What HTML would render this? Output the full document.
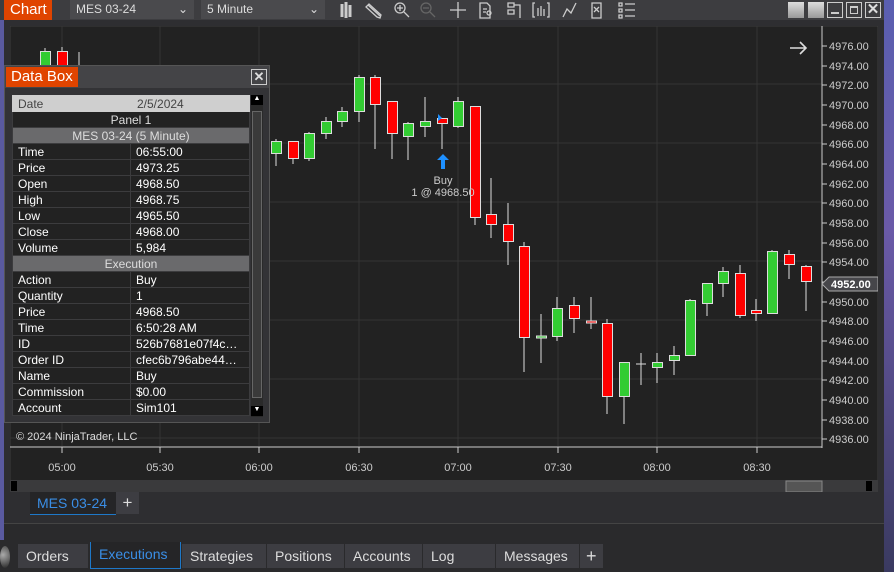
<!DOCTYPE html>
<html><head><meta charset="utf-8"><style>
*{margin:0;padding:0;box-sizing:border-box}
body{width:894px;height:572px;overflow:hidden;background:#2a2a2c;font-family:"Liberation Sans",sans-serif;position:relative}
.abs{position:absolute}
.dd{position:absolute;top:0;height:19px;background:#4a4a4d;color:#ddd;font-size:12px;line-height:18px;padding-left:6px}
.db td{height:16px;font-size:12px;color:#fff;border:1px solid #3c3c3e;padding:0 5px;white-space:nowrap;overflow:hidden}
.db tr.h td{background:#6a6a6c;color:#ddd;text-align:center}
.tab{position:absolute;top:544px;height:24px;background:#3d3d42;color:#ddd;font-size:14px;line-height:24px;padding-left:8px}
</style></head><body>
<div class="abs" style="left:884px;top:0;width:10px;height:572px;background:linear-gradient(#5a5fb0,#6a5aa8 40%,#3a3a60)"></div>
<div class="abs" style="left:0;top:20px;width:4px;height:520px;background:#5a5aa0"></div>
<div class="abs" style="left:0;top:0;width:884px;height:20px;background:#3d3d40"></div>
<div class="abs" style="left:4px;top:0;width:48px;height:20px;background:#e04400;color:#fff;font-size:15px;line-height:19px;padding-left:6px">Chart</div>
<div class="dd" style="left:70px;width:124px">MES 03-24<span style="position:absolute;right:6px">⌄</span></div>
<div class="dd" style="left:201px;width:124px">5 Minute<span style="position:absolute;right:6px">⌄</span></div>
<svg class="abs" style="left:330px;top:0" width="310" height="20" fill="none" stroke="#ccc" stroke-width="1.3">
<path d="M12 4v13M16 2v16M20 5v12" stroke-width="3"/>
<path d="M38 5l12 11M36 7l3-3 12 11-1 3-3-1z"/>
<circle cx="70" cy="8" r="5"/><path d="M74 12l5 5M67 8h6M70 5v6"/>
<g stroke="#666"><circle cx="96" cy="8" r="5"/><path d="M100 12l5 5M93 8h6"/></g>
<path d="M128 2v16M120 10h16"/>
<path d="M150 3h7l3 3v12h-10zM153 9h4M153 12h3"/><circle cx="159" cy="13" r="2"/>
<path d="M178 3h6v4h-6zM178 10h6v4h-6zM184 5h6v13"/>
<path d="M205 3h-2v14h2M217 3h2v14h-2M208 8v8M211 6v10M214 9v7"/>
<path d="M233 17l4-8 4 4 5-10"/>
<path d="M262 3h9v15h-9zM264 7l5 5M264 12l5-5"/>
<path d="M289 3h3v3h-3zM289 9h3v3h-3zM289 15h3v3h-3zM295 4h10M295 10h10M295 16h10"/>
</svg>
<div class="abs" style="left:788px;top:2px;width:16px;height:16px;background:linear-gradient(#ddd,#999)"></div>
<div class="abs" style="left:808px;top:2px;width:16px;height:16px;background:linear-gradient(#ddd,#999)"></div>
<div class="abs" style="left:827px;top:2px;width:16px;height:16px;border:1px solid #ccc"><div style="position:absolute;left:3px;right:3px;bottom:3px;height:2px;background:#ccc"></div></div>
<div class="abs" style="left:846px;top:2px;width:16px;height:16px;border:1px solid #ccc"><div style="position:absolute;left:3px;right:3px;top:3px;bottom:3px;border:1px solid #ccc;border-top-width:2px"></div></div>
<div class="abs" style="left:865px;top:2px;width:16px;height:16px;border:1px solid #ccc;color:#ddd;font-size:15px;line-height:13px;text-align:center;font-weight:bold">✕</div>
<div class="abs" style="left:4px;top:20px;width:880px;height:504px;background:#2e2e31;border-bottom:1px solid #444"></div>
<svg class="abs" style="left:10px;top:26px" width="868" height="466">
<rect x="0" y="0" width="868" height="466" fill="#222" stroke="#3c3c3c"/>
<g stroke="#343434" stroke-width="1">
<path d="M52 0v420M150 0v420M249 0v420M349 0v420M448 0v420M548 0v420M647 0v420M747 0v420"/>
<path d="M0 58h812M0 117h812M0 176h812M0 235h812M0 294h812M0 353h812M0 412h812"/>
</g>
<path d="M0 421h812M812 0v422" stroke="#ccc"/>
<g stroke="#ccc"><path d="M52 421v6M150 421v6M249 421v6M349 421v6M448 421v6M548 421v6M647 421v6M747 421v6"/>
<path d="M812 20h5M812 40h5M812 59h5M812 79h5M812 99h5M812 118h5M812 138h5M812 158h5M812 177h5M812 197h5M812 217h5M812 236h5M812 256h5M812 276h5M812 295h5M812 315h5M812 335h5M812 354h5M812 374h5M812 394h5M812 413h5"/></g>
<g fill="#ccc" font-size="11" font-family="Liberation Sans">
<text x="819" y="24">4976.00</text><text x="819" y="44">4974.00</text><text x="819" y="63">4972.00</text><text x="819" y="83">4970.00</text><text x="819" y="103">4968.00</text><text x="819" y="122">4966.00</text><text x="819" y="142">4964.00</text><text x="819" y="162">4962.00</text><text x="819" y="181">4960.00</text><text x="819" y="201">4958.00</text><text x="819" y="221">4956.00</text><text x="819" y="240">4954.00</text><text x="819" y="280">4950.00</text><text x="819" y="299">4948.00</text><text x="819" y="319">4946.00</text><text x="819" y="339">4944.00</text><text x="819" y="358">4942.00</text><text x="819" y="378">4940.00</text><text x="819" y="398">4938.00</text><text x="819" y="417">4936.00</text>
<text x="52" y="445" text-anchor="middle">05:00</text><text x="150" y="445" text-anchor="middle">05:30</text><text x="249" y="445" text-anchor="middle">06:00</text><text x="349" y="445" text-anchor="middle">06:30</text><text x="448" y="445" text-anchor="middle">07:00</text><text x="548" y="445" text-anchor="middle">07:30</text><text x="647" y="445" text-anchor="middle">08:00</text><text x="747" y="445" text-anchor="middle">08:30</text>
</g>
<path d="M812 258l7-7h49v14h-49z" fill="#46464a" stroke="#aaa"/>
<text x="821" y="262" fill="#fff" font-size="11" font-weight="bold" font-family="Liberation Sans">4952.00</text>
<path d="M780 22h16M790 16l6 6-6 6" stroke="#ddd" stroke-width="1.6" fill="none"/>
<rect x="0" y="454" width="868" height="12" fill="#3a3a3c"/>
<rect x="1" y="455" width="6" height="10" fill="#000"/><rect x="856" y="455" width="6" height="10" fill="#000"/>
<rect x="776" y="455" width="36" height="11" fill="#555" stroke="#888"/>
</svg>
<svg class="abs" style="left:0;top:0" width="894" height="572">
<g stroke="#ddd" stroke-width="1">
<path d="M45 48v16M62 47v17M79 52v14M276 139v27M293 141v23M309 132v29M326 117v22M342 107v20M359 75v47M375 75v74M392 101v58M408 122v38M425 97v40M442 118v31M458 97v31M475 106v119M491 178v60M508 203v62M524 242v130M541 314v49M557 297v44M574 297v36M591 297v32M607 319v95M624 362v62M641 353v32M657 353v30M674 346v29M690 299v56M707 283v33M723 267v30M740 265v53M756 299v22M772 250v64M789 250v29M806 265v46"/>
</g>
<g stroke="#ddd" stroke-width="1">
<rect x="40.5" y="51.5" width="10" height="15" fill="#33cc33"/>
<rect x="57.5" y="51.5" width="10" height="15" fill="#f00"/>
<g fill="#33cc33">
<rect x="271.5" y="141.5" width="10" height="12"/><rect x="304.5" y="133.5" width="10" height="25"/><rect x="321.5" y="121.5" width="10" height="12"/><rect x="337.5" y="111.5" width="10" height="10"/><rect x="354.5" y="77.5" width="10" height="34"/><rect x="403.5" y="123.5" width="10" height="13"/><rect x="420.5" y="121.5" width="10" height="5"/><rect x="453.5" y="101.5" width="10" height="25"/><rect x="536.5" y="336" width="10" height="2"/><rect x="552.5" y="308.5" width="10" height="28"/><rect x="619.5" y="362.5" width="10" height="34"/><rect x="652.5" y="362.5" width="10" height="5"/><rect x="669.5" y="355.5" width="10" height="5"/><rect x="685.5" y="300.5" width="10" height="55"/><rect x="702.5" y="283.5" width="10" height="20"/><rect x="718.5" y="271.5" width="10" height="12"/><rect x="767.5" y="251.5" width="10" height="62"/>
</g>
<g fill="#f00">
<rect x="288.5" y="141.5" width="10" height="17"/><rect x="370.5" y="77.5" width="10" height="27"/><rect x="387.5" y="101.5" width="10" height="32"/><rect x="437.5" y="118.5" width="10" height="5"/><rect x="470.5" y="106.5" width="10" height="111"/><rect x="486.5" y="214.5" width="10" height="10"/><rect x="503.5" y="224.5" width="10" height="17"/><rect x="519.5" y="246.5" width="10" height="91"/><rect x="569.5" y="305.5" width="10" height="13"/><rect x="586.5" y="321" width="10" height="2"/><rect x="602.5" y="323.5" width="10" height="73"/><rect x="735.5" y="273.5" width="10" height="42"/><rect x="751.5" y="310.5" width="10" height="3"/><rect x="784.5" y="254.5" width="10" height="10"/><rect x="801.5" y="266.5" width="10" height="15"/>
</g>
</g>
<path d="M636 364h10" stroke="#ddd"/>
<path d="M438 114l4 4-4 3z" fill="#1e90ff"/>
<path d="M443 154l-6 6h4v9h4v-9h4z" fill="#1e90ff"/>
<text x="443" y="184" fill="#ccc" font-size="11" text-anchor="middle" font-family="Liberation Sans">Buy</text>
<text x="443" y="196" fill="#ccc" font-size="11" text-anchor="middle" font-family="Liberation Sans">1 @ 4968.50</text>
<text x="16" y="440" fill="#ddd" font-size="11" font-family="Liberation Sans">© 2024 NinjaTrader, LLC</text>
</svg>
<div class="abs" style="left:4px;top:65px;width:266px;height:358px;background:#333336;border:1px solid #555">
<div style="position:absolute;left:0;top:0;width:264px;height:22px;background:#444447"></div>
<div style="position:absolute;left:1px;top:1px;width:72px;height:20px;background:#e04400;color:#fff;font-size:15px;line-height:20px;padding-left:5px">Data Box</div>
<div style="position:absolute;left:246px;top:3px;width:16px;height:16px;border:1px solid #ccc;color:#ddd;font-size:13px;line-height:14px;text-align:center;font-weight:bold">✕</div>
<table class="db" style="position:absolute;left:7px;top:29px;width:238px;border-collapse:collapse;table-layout:fixed;background:#222">
<colgroup><col style="width:118px"><col></colgroup>
<tr><td style="background:#cfcfcf;color:#444;border-color:#cfcfcf">Date</td><td style="background:#cfcfcf;color:#444;padding-left:6px;border-color:#cfcfcf">2/5/2024</td></tr>
<tr><td colspan="2" style="text-align:center;color:#ddd">Panel 1</td></tr>
<tr class="h"><td colspan="2">MES 03-24 (5 Minute)</td></tr>
<tr><td>Time</td><td>06:55:00</td></tr><tr><td>Price</td><td>4973.25</td></tr><tr><td>Open</td><td>4968.50</td></tr><tr><td>High</td><td>4968.75</td></tr><tr><td>Low</td><td>4965.50</td></tr><tr><td>Close</td><td>4968.00</td></tr><tr><td>Volume</td><td>5,984</td></tr>
<tr class="h"><td colspan="2">Execution</td></tr>
<tr><td>Action</td><td>Buy</td></tr><tr><td>Quantity</td><td>1</td></tr><tr><td>Price</td><td>4968.50</td></tr><tr><td>Time</td><td>6:50:28 AM</td></tr><tr><td>ID</td><td>526b7681e07f4c…</td></tr><tr><td>Order ID</td><td>cfec6b796abe44…</td></tr><tr><td>Name</td><td>Buy</td></tr><tr><td>Commission</td><td>$0.00</td></tr><tr><td>Account</td><td>Sim101</td></tr>
</table>
<div style="position:absolute;left:246px;top:29px;width:12px;height:322px;background:#2a2a2a"></div>
<div style="position:absolute;left:246px;top:29px;width:12px;height:10px;background:#000;color:#fff;font-size:7px;text-align:center">▲</div>
<div style="position:absolute;left:247px;top:45px;width:10px;height:287px;border:1px solid #666;background:#3a3a3a"></div>
<div style="position:absolute;left:246px;top:340px;width:12px;height:10px;background:#000;color:#fff;font-size:7px;text-align:center">▼</div>
</div>
<div class="abs" style="left:30px;top:492px;width:86px;height:23px;background:#252527;border-bottom:1px solid #1e78c8;color:#3a8ee6;font-size:14px;line-height:23px;padding-left:7px">MES 03-24</div>
<div class="abs" style="left:116px;top:492px;width:23px;height:22px;background:#3d3d42;color:#ddd;font-size:17px;line-height:22px;text-align:center">+</div>
<div class="abs" style="left:0;top:546px;width:10px;height:22px;border-radius:50%;background:radial-gradient(circle at 30% 40%,#aaa,#222)"></div>
<div class="tab" style="left:18px;width:70px">Orders</div>
<div class="tab" style="left:90px;width:91px;background:#252527;color:#3a8ee6;border:1px solid #1e78c8;border-top:none;top:542px;height:27px">Executions</div>
<div class="tab" style="left:182px;width:84px">Strategies</div>
<div class="tab" style="left:267px;width:77px">Positions</div>
<div class="tab" style="left:345px;width:77px">Accounts</div>
<div class="tab" style="left:423px;width:72px">Log</div>
<div class="tab" style="left:496px;width:83px">Messages</div>
<div class="tab" style="left:580px;width:23px;padding-left:6px;font-size:18px">+</div>
</body></html>
